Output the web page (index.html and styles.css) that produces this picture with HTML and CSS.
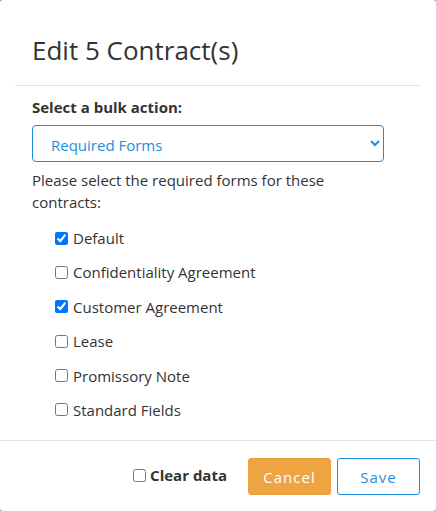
FILE: index.html
```html
<!DOCTYPE html>
<html lang="en">
  <head>
    <meta charset="UTF-8" />
    <meta name="viewport" content="width=device-width, initial-scale=1.0" />
    <title>Edit Contracts</title>
    <link rel="stylesheet" href="styles.css">
  </head>
  <body>
    <div class="modal">
      <div class="modal-header">
        <h1>Edit 5 Contract(s)</h1>
      </div>

      <div class="modal-body">
        <label for="action" class="field-label">Select a bulk action:</label>
        <select id="action" class="action-select">
          <option>Required Forms</option>
        </select>
        <p class="hint">Please select the required forms for these contracts:</p>

        <div class="form-list">
          <label class="check"><input type="checkbox" checked /> Default</label>
          <label class="check"><input type="checkbox" /> Confidentiality Agreement</label>
          <label class="check"><input type="checkbox" checked /> Customer Agreement</label>
          <label class="check"><input type="checkbox" /> Lease</label>
          <label class="check"><input type="checkbox" /> Promissory Note</label>
          <label class="check"><input type="checkbox" /> Standard Fields</label>
        </div>
      </div>

      <div class="modal-footer">
        <label class="check clear"><input type="checkbox" /> Clear data</label>
        <button class="btn btn-cancel">Cancel</button>
        <button class="btn btn-save">Save</button>
      </div>
    </div>
  </body>
</html>
```

FILE: styles.css
```css
body {
  font-family: "Open Sans", Arial, sans-serif;
  background: #9a9a9a;
  margin: 0;
  color: #333;
}
.modal {
  background: white;
  border-radius: 3px;
  width: 436px;
  height: 511px;
  display: flex;
  flex-direction: column;
  box-sizing: border-box;
}
.modal-header {
  margin: 0 15px;
  padding: 31px 17px 16px;
  border-bottom: 1px solid #e2e2e2;
}
h1 {
  font-size: 26px;
  font-weight: 400;
  margin: 0;
  line-height: 38px;
  color: #333;
}
.modal-body {
  padding: 10px 52px 0 32px;
  flex: 1;
}
.field-label {
  display: block;
  font-size: 15px;
  font-weight: bold;
  line-height: 22px;
  margin-bottom: 7px;
}
.action-select {
  width: 100%;
  height: 37px;
  border: 1px solid #1a8fe0;
  border-radius: 4px;
  color: #1a8fe0;
  background: white;
  font-family: inherit;
  font-size: 15px;
  padding: 2px 14px 0;
}
.hint {
  font-size: 15px;
  line-height: 22px;
  margin: 7px 0 14px;
}
.form-list {
  padding-left: 19px;
  display: flex;
  flex-direction: column;
  gap: 12.4px;
}
.check {
  font-size: 15px;
  line-height: 22px;
  display: flex;
  align-items: center;
}
.check input {
  margin: 0 5px 0 4px;
}
.modal-footer {
  border-top: 1px solid #e2e2e2;
  padding: 17px 16px 16px;
  display: flex;
  justify-content: flex-end;
  align-items: center;
  gap: 6px;
}
.clear {
  font-weight: bold;
  margin-right: 15px;
  margin-bottom: 3px;
}
.clear input {
  margin-right: 4px;
}
.btn {
  width: 83px;
  height: 37px;
  border-radius: 3px;
  font-family: inherit;
  font-size: 15px;
  letter-spacing: 1px;
  cursor: pointer;
}
.btn-cancel {
  background: #efa442;
  border: 1px solid #eba03e;
  color: white;
}
.btn-save {
  background: white;
  border: 1px solid #1a8fe0;
  color: #1a8fe0;
}
```
